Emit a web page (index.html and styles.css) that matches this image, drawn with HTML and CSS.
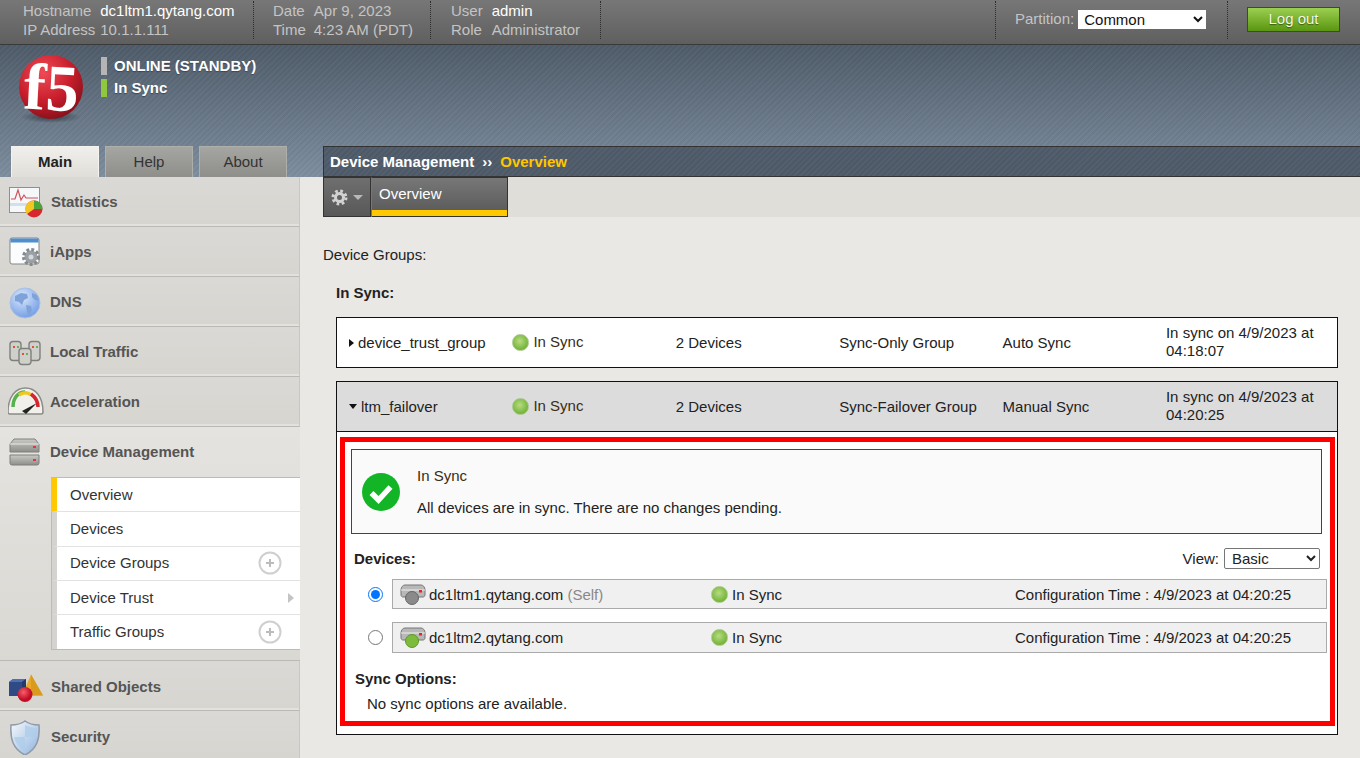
FILE: index.html
```html
<!DOCTYPE html>
<html lang="en">
<head>
<meta charset="utf-8">
<title>Device Management - Overview</title>
<link rel="stylesheet" href="styles.css">
</head>
<body>
<header class="topbar">
  <div class="seg seg-host">
    <div class="kv"><span class="k">Hostname</span><span class="v">dc1ltm1.qytang.com</span><span class="k">IP Address</span><span class="k">10.1.1.111</span></div>
  </div>
  <div class="seg seg-date">
    <div class="kv"><span class="k">Date</span><span class="k">Apr 9, 2023</span><span class="k">Time</span><span class="k">4:23 AM (PDT)</span></div>
  </div>
  <div class="seg seg-user">
    <div class="kv"><span class="k">User</span><span class="v">admin</span><span class="k">Role</span><span class="k">Administrator</span></div>
  </div>
  <div class="seg seg-spacer"></div>
  <div class="seg seg-part">
    <span class="k">Partition:</span>
    <select class="part-select"><option>Common</option></select>
  </div>
  <div class="seg seg-logout"><button class="logout">Log out</button></div>
</header>

<section class="banner">
  <div class="brand">
    <svg class="logo" width="70" height="88" viewBox="0 -8 70 88">
      <defs>
        <radialGradient id="ball" cx="38%" cy="28%" r="80%">
          <stop offset="0" stop-color="#ee4a55"/><stop offset=".55" stop-color="#c81e2c"/><stop offset="1" stop-color="#7e0e18"/>
        </radialGradient>
        <radialGradient id="ballshadow"><stop offset="0" stop-color="#1c2229" stop-opacity=".7"/><stop offset="1" stop-color="#1c2229" stop-opacity="0"/></radialGradient>
      </defs>
      <ellipse cx="33" cy="62" rx="30" ry="6" fill="url(#ballshadow)"/>
      <circle cx="33" cy="32" r="32" fill="url(#ball)"/>
      <text class="logo-text" x="6" y="55" transform="rotate(3 33 32)">f5</text>
    </svg>
    <div class="status">
      <div class="status-line"><i class="bar bar-gray"></i>ONLINE (STANDBY)</div>
      <div class="status-line"><i class="bar bar-green"></i>In Sync</div>
    </div>
  </div>
  <div class="navrow">
    <nav class="tabs">
      <span class="tab tab-on">Main</span>
      <span class="tab">Help</span>
      <span class="tab">About</span>
    </nav>
    <div class="crumb"><b>Device Management</b><span class="sep">››</span><b class="crumb-on">Overview</b></div>
  </div>
</section>

<div class="layout">
  <aside class="side">
    <div class="item item-x">
      <svg class="ico" width="42" height="36" viewBox="0 0 42 36">
        <g transform="translate(0 2)">
        <rect x="1.500" y="1.500" width="30" height="25" fill="#f6f7f8" stroke="#8f8f8f"/>
        <rect x="2" y="17" width="29" height="3" fill="#cfe0ee"/>
        <path d="M3 13h4l3-9 3 10 3-5 2 3h12" fill="none" stroke="#d2505a" stroke-width="1.200"/>
        <circle cx="26" cy="23" r="8.500" fill="#d8282f"/>
        <path d="M26 23V14.500A8.500 8.500 0 0 1 34.500 23Z" fill="#4aa63a"/>
        <path d="M26 23V14.500A8.500 8.500 0 0 0 19 28Z" fill="#f2c521"/>
        </g>
      </svg>
      <span>Statistics</span>
    </div>
    <div class="item">
      <svg class="ico" width="42" height="36" viewBox="0 0 42 36">
        <g transform="translate(0 2)">
        <rect x="2" y="2" width="29" height="26" rx="2" fill="#fbfcfd" stroke="#858585"/>
        <rect x="2.500" y="2.500" width="28" height="4" fill="#4f8fd0"/>
        <circle cx="23" cy="21" r="6.500" fill="#9aa0a4" stroke="#83898d" stroke-width="5" stroke-dasharray="2.500 1.800"/>
        <circle cx="23" cy="21" r="6" fill="#9aa0a4"/>
        <circle cx="23" cy="21" r="2.500" fill="#d5d8da"/>
        </g>
      </svg>
      <span>iApps</span>
    </div>
    <div class="item">
      <svg class="ico" width="42" height="36" viewBox="0 0 42 36">
        <defs><radialGradient id="globe" cx="40%" cy="30%" r="75%"><stop offset="0" stop-color="#dbe8fb"/><stop offset="1" stop-color="#6f9be6"/></radialGradient></defs>
        <circle cx="17" cy="19" r="15" fill="url(#globe)" stroke="#a9c0e2"/>
        <path d="M7 12l6-3 6 1 1 4-4 2-2 5-3-3-4-1zM18 21l5 1 1 4-3 6-2-4zM24 9l5 2 2 6-4-1-3-3z" fill="#7fa3d8"/>
      </svg>
      <span>DNS</span>
    </div>
    <div class="item">
      <svg class="ico" width="42" height="36" viewBox="0 0 42 36">
        <g fill="#cfcfcc" stroke="#7f7f7c" stroke-width="1.400">
          <rect x="2" y="7.500" width="11" height="19" rx="3"/>
          <rect x="21" y="7.500" width="11" height="19" rx="3"/>
          <rect x="11" y="14.500" width="12" height="16" rx="3"/>
        </g>
        <path d="M5 13h2M24 13h2M14 20h2" stroke="#e0503c" stroke-width="2"/>
        <path d="M9 13h2M28 13h2M18 20h2" stroke="#6ab04c" stroke-width="2"/>
      </svg>
      <span>Local Traffic</span>
    </div>
    <div class="item">
      <svg class="ico" width="42" height="36" viewBox="0 0 42 36">
        <g transform="translate(-1 -2)">
        <path d="M1 30c0-16 8-24 17.500-24S36 14 36 30c0 1-1 2-2 2H3c-1 0-2-1-2-2z" fill="#f1f0ea" stroke="#8b8b87" stroke-width="1.500"/>
        <path d="M6 25c0-9 5-15 12-15" fill="none" stroke="#56b24c" stroke-width="3.500"/>
        <path d="M12 13c4-3 9-3 12 0" fill="none" stroke="#f0c722" stroke-width="3.500"/>
        <path d="M24 12c4 3 7 8 7 13" fill="none" stroke="#d8242c" stroke-width="3.500"/>
        <path d="M15 29l15-8-11 11z" fill="#222"/>
        </g>
      </svg>
      <span>Acceleration</span>
    </div>
    <div class="open">
      <div class="item item-open">
        <svg class="ico" width="42" height="36" viewBox="0 0 42 36">
          <defs><linearGradient id="disk" x1="0" y1="0" x2="0" y2="1"><stop offset="0" stop-color="#c9c9c6"/><stop offset="1" stop-color="#8d8d8a"/></linearGradient></defs>
          <path d="M2 10l4-5h21l4 5v8H2z" fill="url(#disk)" stroke="#7f7f7c"/>
          <path d="M2 21h29v8a2 2 0 0 1-2 2H4a2 2 0 0 1-2-2z" fill="url(#disk)" stroke="#7f7f7c"/>
          <path d="M2 10h29" stroke="#ecece9"/>
          <rect x="25" y="12" width="3" height="2" fill="#e33"/>
          <rect x="25" y="25" width="3" height="2" fill="#e33"/>
        </svg>
        <span>Device Management</span>
      </div>
      <ul class="sub">
        <li class="sub-on">Overview</li>
        <li>Devices</li>
        <li class="sub-up">Device Groups<svg class="plus" width="24" height="24" viewBox="0 0 24 24"><circle cx="12" cy="12" r="10.500" fill="none" stroke="#cfcfcf" stroke-width="2"/><path d="M12 8v8M8 12h8" stroke="#bcbcbc" stroke-width="2"/></svg></li>
        <li>Device Trust<svg class="more" width="6" height="10" viewBox="0 0 6 10"><path d="M0 0l6 5-6 5z" fill="#c4c4c4"/></svg></li>
        <li>Traffic Groups<svg class="plus" width="24" height="24" viewBox="0 0 24 24"><circle cx="12" cy="12" r="10.500" fill="none" stroke="#cfcfcf" stroke-width="2"/><path d="M12 8v8M8 12h8" stroke="#bcbcbc" stroke-width="2"/></svg></li>
      </ul>
    </div>
    <div class="item item-x item-low">
      <svg class="ico" width="42" height="36" viewBox="0 0 42 36">
        <path d="M23 5.500l12 21H14z" fill="#e8a92a"/>
        <path d="M23 5.500l12 21h-12z" fill="#d99a1e"/>
        <path d="M1 13l4-3h13v13l-4 4H1z" fill="#2f4a84"/>
        <path d="M1 13l4-3h13l-4 3z" fill="#4f6fae"/>
        <path d="M14 13l4-3v13l-4 4z" fill="#233a6c"/>
        <defs><radialGradient id="rball" cx="40%" cy="35%"><stop offset="0" stop-color="#f4606c"/><stop offset="1" stop-color="#c40c24"/></radialGradient></defs>
        <circle cx="17" cy="25.500" r="7.500" fill="url(#rball)"/>
      </svg>
      <span>Shared Objects</span>
    </div>
    <div class="item item-x item-low">
      <svg class="ico" width="42" height="36" viewBox="0 0 42 36">
        <defs><linearGradient id="shield" x1="0" y1="0" x2="1" y2="1"><stop offset="0" stop-color="#f8f9fb"/><stop offset="1" stop-color="#8db4e0"/></linearGradient></defs>
        <path d="M17 2c4 3 9 4 14 4 1 14-2 24-14 30C5 30 2 20 3 6c5 0 10-1 14-4z" fill="url(#shield)" stroke="#8f9aa8" stroke-width="1.500"/>
        <path d="M17 6v12h11c1-3 1-6 1-9-4 0-8-1-12-3zM17 18H6c1 5 5 11 11 14z" fill="#aecdea" opacity=".8"/>
      </svg>
      <span>Security</span>
    </div>
  </aside>

  <main class="main">
    <div class="subnav">
      <span class="gear-tab">
        <svg width="17" height="17" viewBox="0 0 17 17"><circle cx="8.500" cy="8.500" r="6.500" fill="none" stroke="#d2d2d2" stroke-width="3" stroke-dasharray="2.600 2.500"/><circle cx="8.500" cy="8.500" r="4" fill="none" stroke="#d2d2d2" stroke-width="3"/></svg>
        <svg width="10" height="5" viewBox="0 0 10 5"><path d="M0 0h10l-5 5z" fill="#b8b8b8"/></svg>
      </span>
      <span class="sub-tab">Overview</span>
    </div>

    <div class="page">
      <p class="dg-title">Device Groups:</p>
      <p class="insync-title">In Sync:</p>

      <div class="group">
        <div class="ghead">
          <div class="gname"><i class="tri-r"></i>device_trust_group</div>
          <div class="gstat"><i class="dot"></i><span>In Sync</span></div>
          <div>2 Devices</div>
          <div>Sync-Only Group</div>
          <div>Auto Sync</div>
          <div class="gtime">In sync on 4/9/2023 at 04:18:07</div>
        </div>
      </div>

      <div class="group group-open">
        <div class="ghead ghead-open">
          <div class="gname"><i class="tri-d"></i>ltm_failover</div>
          <div class="gstat"><i class="dot"></i><span>In Sync</span></div>
          <div>2 Devices</div>
          <div>Sync-Failover Group</div>
          <div>Manual Sync</div>
          <div class="gtime">In sync on 4/9/2023 at 04:20:25</div>
        </div>
        <div class="redbox">
          <div class="msg">
            <svg class="check" width="38" height="38" viewBox="0 0 38 38"><circle cx="19" cy="19" r="19" fill="#13b526"/><path d="M9.500 20l7 7 12-13" fill="none" stroke="#fff" stroke-width="5.500"/></svg>
            <div class="msg-text">
              <div class="msg-title">In Sync</div>
              <div>All devices are in sync. There are no changes pending.</div>
            </div>
          </div>
          <div class="dev-head">
            <b>Devices:</b>
            <label class="view">View: <select class="view-select"><option>Basic</option></select></label>
          </div>
          <div class="dev dev-first">
            <input class="radio" type="radio" name="dev" checked>
            <div class="dev-box">
              <div class="dev-name">
                <svg class="srv" width="26" height="22" viewBox="0 0 26 22"><path d="M1 6c0-3 2-5 4-5h16c2 0 4 2 4 5v5c0 1-1 2-2 2H3c-1 0-2-1-2-2z" fill="#b8b8b8" stroke="#777"/><path d="M1 6h24" stroke="#eee"/><rect x="19" y="6" width="3" height="2.500" fill="#e22"/><circle cx="12" cy="14" r="6.500" fill="#8a8a8a" stroke="#666"/></svg>
                <span>dc1ltm1.qytang.com <span class="self">(Self)</span></span>
              </div>
              <div class="dev-stat"><i class="dot"></i>In Sync</div>
              <div class="dev-time">Configuration Time : 4/9/2023 at 04:20:25</div>
            </div>
          </div>
          <div class="dev dev-second">
            <input class="radio" type="radio" name="dev">
            <div class="dev-box">
              <div class="dev-name">
                <svg class="srv" width="26" height="22" viewBox="0 0 26 22"><path d="M1 6c0-3 2-5 4-5h16c2 0 4 2 4 5v5c0 1-1 2-2 2H3c-1 0-2-1-2-2z" fill="#b8b8b8" stroke="#777"/><path d="M1 6h24" stroke="#eee"/><rect x="19" y="6" width="3" height="2.500" fill="#e22"/><circle cx="12" cy="14" r="6.500" fill="#7cbb3c" stroke="#5c9a26"/></svg>
                <span>dc1ltm2.qytang.com</span>
              </div>
              <div class="dev-stat"><i class="dot"></i>In Sync</div>
              <div class="dev-time">Configuration Time : 4/9/2023 at 04:20:25</div>
            </div>
          </div>
          <div class="opt-title">Sync Options:</div>
          <div class="opt-text">No sync options are available.</div>
        </div>
      </div>
    </div>
  </main>
</div>
</body>
</html>
```
FILE: styles.css
```css
* { box-sizing: border-box; }
html, body { height: 758px; overflow: hidden; }
body {
  margin: 0;
  background: #e9e8e4;
  font-family: "Liberation Sans", Arial, sans-serif;
  font-size: 15px;
  line-height: 18px;
  color: #222;
}
p { margin: 0; }

.topbar {
  display: flex;
  height: 45px;
  background: linear-gradient(#777, #5f5f5f);
  border-bottom: 1px solid #3a3a3a;
}
.seg {
  display: flex;
  flex: none;
  align-items: center;
  height: 38px;
  margin-top: 1px;
  border-right: 1px dotted #2c2c2c;
}
.seg-host { width: 254px; padding-left: 23px; }
.seg-date { width: 177px; padding-left: 19px; }
.seg-user { width: 170px; padding-left: 20px; }
.seg-spacer { flex: 1; }
.seg-part { width: 232px; padding: 0 0 2px 19px; gap: 4px; }
.seg-logout { width: 132px; border: 0; padding: 0 0 2px 19px; }
.kv {
  display: grid;
  grid-template-columns: auto auto;
  column-gap: 5px;
  line-height: 19px;
}
.seg-date .kv { column-gap: 8px; }
.seg-user .kv { column-gap: 9px; }
.k { color: #c4c4c4; }
.v { color: #fff; }
.part-select {
  width: 128px;
  height: 19px;
  border: 0;
  padding: 0 0 0 2px;
  background: #fff;
  font: 15px "Liberation Sans", Arial, sans-serif;
  color: #111;
  border-radius: 0;
}
.logout {
  width: 93px;
  height: 25px;
  padding: 0 0 2px;
  border: 1px solid #3f4a2a;
  background: linear-gradient(#9bcf50, #5a9611);
  color: #f4f7ea;
  font: 15px "Liberation Sans", Arial, sans-serif;
  text-shadow: 0 1px 1px #3b5a0c;
}

.banner {
  height: 132px;
  display: flex;
  flex-direction: column;
  justify-content: space-between;
  background:
    repeating-linear-gradient(135deg, rgba(255,255,255,.025) 0 2px, rgba(0,0,0,.025) 2px 4px),
    linear-gradient(#4e5b69, #7e8e9f);
}
.brand { display: flex; padding: 2px 0 0 18px; }
.logo-text {
  font-family: "Liberation Serif", serif;
  font-weight: 700;
  font-size: 66px;
  fill: #fff;
}
.status { margin-left: 13px; padding-top: 10px; color: #fff; font-weight: 700; }
.status-line { display: flex; align-items: center; height: 18px; margin-bottom: 4px; text-shadow: 0 1px 1px #3c4753; }
.bar { width: 6px; height: 18px; margin-right: 7px; }
.bar-gray { background: #b5b5b5; }
.bar-green { background: #8fc73f; }

.navrow { display: flex; align-items: flex-end; height: 31px; }
.tabs { display: flex; width: 323px; padding-left: 11px; gap: 6px; }
.tab {
  width: 88px;
  height: 31px;
  text-align: center;
  line-height: 29px;
  color: #333;
  background: linear-gradient(#a5a5a1, #8e8e8a);
  border: 1px solid #aeaeaa;
  border-bottom: 0;
}
.tab-on {
  font-weight: 700;
  color: #222;
  background: linear-gradient(#f0efeb, #dfded9);
  border-color: #f4f3ef;
}
.crumb {
  flex: 1;
  height: 31px;
  display: flex;
  align-items: center;
  padding-left: 6px;
  color: #fff;
  background:
    repeating-linear-gradient(135deg, rgba(255,255,255,.025) 0 2px, rgba(0,0,0,.025) 2px 4px),
    #4f5b69;
  border: 1px solid #333;
  border-right: 0;
}
.sep { margin: 0 8px; font-weight: 700; }
.crumb-on { color: #ffc600; }

.layout { display: flex; height: 581px; }
.side { width: 300px; flex: none; }
.item {
  display: flex;
  align-items: center;
  height: 50px;
  padding-left: 8px;
  border-right: 1px solid #c8c7c3;
  border-bottom: 1px solid #bab9b5;
  background: linear-gradient(#dad9d5, #d6d5d0);
  box-shadow: inset 0 -2px 0 #e2e1dd;
  color: #555;
  font-weight: 700;
}
.ico { flex: none; }
.item-x span { margin-left: 1px; }
.item-low { padding-top: 2px; }
.item-open {
  background: none;
  border: 0;
  box-shadow: none;
}
.open { height: 234px; background: linear-gradient(#e4e3df, #d9d8d3); border-bottom: 1px solid #bab9b5; }
.sub {
  list-style: none;
  margin: 0 0 0 51px;
  padding: 0;
  height: 173px;
  background: #fff;
  border: 1px solid #bbb;
  border-right: 0;
}
.sub li {
  display: flex;
  align-items: center;
  justify-content: space-between;
  height: 34px;
  padding: 0 18px 0 13px;
  border-left: 5px solid #d4d3cf;
  border-bottom: 1px solid #e2e2e2;
  color: #333;
}
.sub li:nth-child(2) { height: 35px; }
.sub li:last-child { border-bottom: 0; }
.sub .sub-up { padding-bottom: 1px; }
.sub .sub-on { margin-left: -1px; border-left: 6px solid #ffc800; }
.more { margin-right: -12px; }

.main { flex: 1; min-width: 0; padding-left: 23px; }
.subnav { display: flex; height: 40px; background: #dfded9; }
.gear-tab {
  display: flex;
  align-items: center;
  gap: 5px;
  width: 48px;
  padding-left: 7px;
  background: linear-gradient(#6f6f6f, #585858);
  border: 1px solid #333;
}
.sub-tab {
  width: 137px;
  padding: 7px 0 0 7px;
  color: #fff;
  background: linear-gradient(#777, #575757);
  border: 1px solid #333;
  border-left: 1px solid #777;
  border-bottom: 0;
  box-shadow: inset 0 -1px 0 #333, inset 0 -7px 0 #ffc800;
}

.page { padding: 29px 22px 0 0; }
.dg-title { height: 18px; }
.insync-title { height: 18px; margin: 20px 0 15px 13px; font-weight: 700; }

.group {
  margin-left: 13px;
  width: 1002px;
  background: #fff;
  border: 1px solid #111;
}
.group + .group { margin-top: 13px; }
.group-open { height: 354px; }
.ghead {
  display: grid;
  grid-template-columns: repeat(6, 163.400px);
  align-items: center;
  height: 49px;
  padding-left: 12px;
}
.ghead-open {
  height: 50px;
  background: #dcdcdc;
  border-bottom: 1px solid #111;
}
.gname { display: flex; align-items: center; gap: 4px; }
.tri-r { width: 0; height: 0; border-left: 5px solid #111; border-top: 4px solid transparent; border-bottom: 4px solid transparent; }
.tri-d { width: 0; height: 0; border-top: 5px solid #111; border-left: 4px solid transparent; border-right: 4px solid transparent; }
.gstat { display: flex; align-items: center; gap: 4px; }
.gstat span { margin-top: -2px; color: #3c2c10; }
.dot {
  flex: none;
  width: 17px;
  height: 17px;
  border-radius: 50%;
  background: radial-gradient(circle at 45% 40%, #b6dc82, #76b43a 70%, #5f9c2c);
  border: 1px solid #a5c888;
}
.gtime { margin-top: -1px; }

.redbox {
  height: 289px;
  margin: 5px 2px 0 3px;
  padding: 7px 8px 0 6px;
  border: 5px solid #f00;
}
.msg {
  display: flex;
  align-items: center;
  height: 85px;
  padding-left: 10px;
  background: #fafafa;
  border: 1px solid #444;
}
.msg-text { margin-left: 17px; }
.msg-title { margin-bottom: 14px; color: #3c2c10; }
.dev-head {
  display: flex;
  align-items: center;
  justify-content: space-between;
  height: 21px;
  margin: 14px 2px 10px 3px;
}
.view { display: flex; align-items: center; gap: 5px; }
.view-select {
  width: 96px;
  height: 21px;
  padding: 0 0 0 3px;
  background: #fff;
  border: 1px solid #767676;
  border-radius: 2px;
  font: 15px "Liberation Sans", Arial, sans-serif;
  color: #222;
}
.dev { display: flex; align-items: center; height: 30px; margin: 0 -5px 0 17px; }
.dev-first .dev-box { padding-top: 1px; }
.dev-second { height: 31px; margin-top: 13px; }
.radio { width: 15px; height: 15px; margin: 0 9px 0 0; }
.dev-box {
  flex: 1;
  display: flex;
  align-items: center;
  height: 100%;
  background: #f0f0f0;
  border: 1px solid #aaa;
}
.dev-name { display: flex; align-items: center; width: 318px; padding-left: 7px; gap: 3px; }
.srv { flex: none; }
.self { color: #888; }
.dev-stat { display: flex; align-items: center; gap: 4px; width: 304px; }
.dev-time { white-space: nowrap; }
.opt-title { margin: 17px 0 7px 4px; font-weight: 700; }
.opt-text { margin-left: 16px; }
```
